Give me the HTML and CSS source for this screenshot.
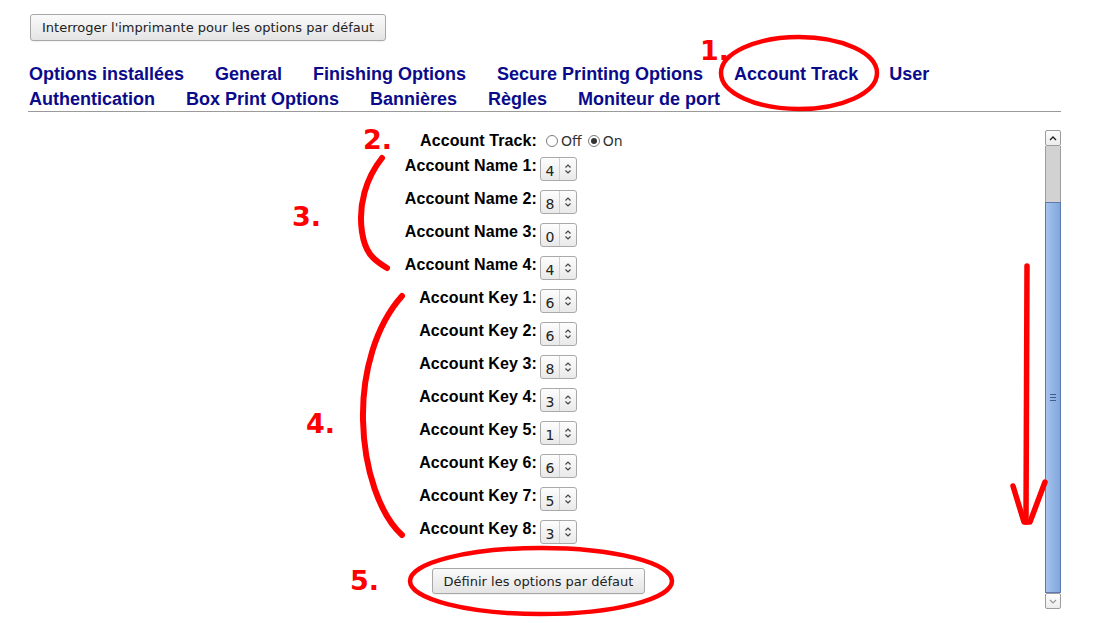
FILE: index.html
```html
<!DOCTYPE html>
<html lang="fr">
<head>
<meta charset="utf-8">
<title>Options par défaut</title>
<link rel="stylesheet" href="styles.css">
</head>
<body>
<div class="page">
  <div class="top">
    <button class="btn">Interroger l'imprimante pour les options par défaut</button>
  </div>
  <nav class="tabs">
    <a>Options installées</a>
    <a>General</a>
    <a>Finishing Options</a>
    <a>Secure Printing Options</a>
    <a>Account Track</a>
    <a>User</a>
    <a>Authentication</a>
    <a>Box Print Options</a>
    <a>Bannières</a>
    <a>Règles</a>
    <a>Moniteur de port</a>
  </nav>
  <div class="content">
    <div class="main">
      <div class="form">
        <div class="lbl first">Account Track:</div>
        <div class="ctl first radios">
          <span class="radio"></span><span class="rtext">Off</span>
          <span class="radio on"></span><span class="rtext">On</span>
        </div>

        <div class="lbl">Account Name 1:</div>
        <div class="ctl"><span class="sel"><span class="num">4</span><span class="sep"></span><svg class="chev" viewBox="0 0 8 12" width="8" height="12"><path d="M1.5 4.5 L4 2 L6.5 4.5 M1.5 7.5 L4 10 L6.5 7.5" fill="none" stroke="#444" stroke-width="1.2"/></svg></span></div>
        <div class="lbl">Account Name 2:</div>
        <div class="ctl"><span class="sel"><span class="num">8</span><span class="sep"></span><svg class="chev" viewBox="0 0 8 12" width="8" height="12"><path d="M1.5 4.5 L4 2 L6.5 4.5 M1.5 7.5 L4 10 L6.5 7.5" fill="none" stroke="#444" stroke-width="1.2"/></svg></span></div>
        <div class="lbl">Account Name 3:</div>
        <div class="ctl"><span class="sel"><span class="num">0</span><span class="sep"></span><svg class="chev" viewBox="0 0 8 12" width="8" height="12"><path d="M1.5 4.5 L4 2 L6.5 4.5 M1.5 7.5 L4 10 L6.5 7.5" fill="none" stroke="#444" stroke-width="1.2"/></svg></span></div>
        <div class="lbl">Account Name 4:</div>
        <div class="ctl"><span class="sel"><span class="num">4</span><span class="sep"></span><svg class="chev" viewBox="0 0 8 12" width="8" height="12"><path d="M1.5 4.5 L4 2 L6.5 4.5 M1.5 7.5 L4 10 L6.5 7.5" fill="none" stroke="#444" stroke-width="1.2"/></svg></span></div>

        <div class="lbl">Account Key 1:</div>
        <div class="ctl"><span class="sel"><span class="num">6</span><span class="sep"></span><svg class="chev" viewBox="0 0 8 12" width="8" height="12"><path d="M1.5 4.5 L4 2 L6.5 4.5 M1.5 7.5 L4 10 L6.5 7.5" fill="none" stroke="#444" stroke-width="1.2"/></svg></span></div>
        <div class="lbl">Account Key 2:</div>
        <div class="ctl"><span class="sel"><span class="num">6</span><span class="sep"></span><svg class="chev" viewBox="0 0 8 12" width="8" height="12"><path d="M1.5 4.5 L4 2 L6.5 4.5 M1.5 7.5 L4 10 L6.5 7.5" fill="none" stroke="#444" stroke-width="1.2"/></svg></span></div>
        <div class="lbl">Account Key 3:</div>
        <div class="ctl"><span class="sel"><span class="num">8</span><span class="sep"></span><svg class="chev" viewBox="0 0 8 12" width="8" height="12"><path d="M1.5 4.5 L4 2 L6.5 4.5 M1.5 7.5 L4 10 L6.5 7.5" fill="none" stroke="#444" stroke-width="1.2"/></svg></span></div>
        <div class="lbl">Account Key 4:</div>
        <div class="ctl"><span class="sel"><span class="num">3</span><span class="sep"></span><svg class="chev" viewBox="0 0 8 12" width="8" height="12"><path d="M1.5 4.5 L4 2 L6.5 4.5 M1.5 7.5 L4 10 L6.5 7.5" fill="none" stroke="#444" stroke-width="1.2"/></svg></span></div>
        <div class="lbl">Account Key 5:</div>
        <div class="ctl"><span class="sel"><span class="num">1</span><span class="sep"></span><svg class="chev" viewBox="0 0 8 12" width="8" height="12"><path d="M1.5 4.5 L4 2 L6.5 4.5 M1.5 7.5 L4 10 L6.5 7.5" fill="none" stroke="#444" stroke-width="1.2"/></svg></span></div>
        <div class="lbl">Account Key 6:</div>
        <div class="ctl"><span class="sel"><span class="num">6</span><span class="sep"></span><svg class="chev" viewBox="0 0 8 12" width="8" height="12"><path d="M1.5 4.5 L4 2 L6.5 4.5 M1.5 7.5 L4 10 L6.5 7.5" fill="none" stroke="#444" stroke-width="1.2"/></svg></span></div>
        <div class="lbl">Account Key 7:</div>
        <div class="ctl"><span class="sel"><span class="num">5</span><span class="sep"></span><svg class="chev" viewBox="0 0 8 12" width="8" height="12"><path d="M1.5 4.5 L4 2 L6.5 4.5 M1.5 7.5 L4 10 L6.5 7.5" fill="none" stroke="#444" stroke-width="1.2"/></svg></span></div>
        <div class="lbl">Account Key 8:</div>
        <div class="ctl"><span class="sel"><span class="num">3</span><span class="sep"></span><svg class="chev" viewBox="0 0 8 12" width="8" height="12"><path d="M1.5 4.5 L4 2 L6.5 4.5 M1.5 7.5 L4 10 L6.5 7.5" fill="none" stroke="#444" stroke-width="1.2"/></svg></span></div>

        <div class="submit"><button class="btn">Définir les options par défaut</button></div>
      </div>
    </div>
    <div class="scrollbar">
      <div class="sb-btn"><svg viewBox="0 0 14 13" width="14" height="13"><path d="M4 8 L7 5 L10 8" fill="none" stroke="#222" stroke-width="1.4"/></svg></div>
      <div class="sb-track"></div>
      <div class="sb-thumb"><span class="grip"></span><span class="grip"></span><span class="grip"></span></div>
      <div class="sb-btn"><svg viewBox="0 0 14 13" width="14" height="13"><path d="M4 5 L7 8 L10 5" fill="none" stroke="#999" stroke-width="1.2"/></svg></div>
    </div>
  </div>
</div>

<svg class="annot" width="1100" height="623" viewBox="0 0 1100 623">
  <g fill="none" stroke="#ff0000" stroke-width="4.5" stroke-linecap="round" stroke-linejoin="round">
    <ellipse cx="799" cy="73" rx="78" ry="36"/>
    <ellipse cx="541" cy="581" rx="131" ry="33"/>
    <path d="M382 158 C 366 178, 358 205, 362 232 C 365 252, 372 259, 387 268" stroke-width="6"/>
    <path d="M402 296 C 376 325, 362 372, 363 420 C 364 470, 380 515, 402 535" stroke-width="6"/>
    <path d="M1027 266 L1026 522" stroke-width="5.5"/>
    <path d="M1013 486 L1024 522 L1030 522 L1045 482" stroke-width="5.5"/>
  </g>
  <g fill="#ff0000" font-family="'DejaVu Sans', sans-serif" font-weight="bold" font-size="27">
    <text x="700" y="60">1.</text>
    <text x="363" y="149">2.</text>
    <text x="292" y="226">3.</text>
    <text x="306" y="433">4.</text>
    <text x="350" y="590">5.</text>
  </g>
</svg>
</body>
</html>
```

FILE: styles.css
```css
html, body {
  margin: 0;
  padding: 0;
  background: #ffffff;
}

body {
  font-family: "Liberation Sans", Arial, sans-serif;
  width: 1100px;
  height: 623px;
  overflow: hidden;
  position: relative;
}

.page {
  display: flex;
  flex-direction: column;
}

.top {
  padding: 14px 0 0 30px;
  height: 27px;
}

.btn {
  font-family: "DejaVu Sans", sans-serif;
  font-size: 13px;
  color: #222;
  height: 27px;
  padding: 0 11px;
  border: 1px solid #a8a8a8;
  border-radius: 3px;
  background: linear-gradient(#fafafa, #e4e4e4);
  box-shadow: 0 1px 0 rgba(0,0,0,0.05);
  margin: 0;
}

.tabs {
  margin: 21px 0 0 28px;
  width: 1033px;
  display: flex;
  flex-wrap: wrap;
  column-gap: 30px;
  border-bottom: 1px solid #9a9a9a;
  box-sizing: border-box;
  height: 50px;
}

.tabs a {
  font-size: 18px;
  font-weight: bold;
  line-height: 25px;
  color: #0a0a8a;
  padding-left: 1px;
}

.content {
  display: flex;
  margin-left: 28px;
  width: 1033px;
}

.main {
  flex: 1;
  padding-left: 4px;
  padding-top: 19px;
}

.form {
  display: grid;
  grid-template-columns: 1fr 1fr;
  column-gap: 3px;
  row-gap: 9px;
}

.lbl {
  font-size: 16px;
  font-weight: bold;
  color: #000;
  text-align: right;
  height: 24px;
  line-height: 18px;
  letter-spacing: 0.1px;
}

.lbl.first {
  height: 20px;
  padding-top: 1px;
  box-sizing: border-box;
  margin-bottom: -3px;
}

.ctl {
  height: 24px;
  display: flex;
  align-items: center;
}

.ctl.first {
  height: 20px;
  margin-bottom: -3px;
}

.radios {
  font-family: "DejaVu Sans", sans-serif;
  font-size: 14px;
  color: #333;
  padding-left: 6px;
}

.radio {
  width: 10px;
  height: 10px;
  border: 1px solid #7a7a7a;
  border-radius: 50%;
  background: #fff;
  margin-right: 3px;
  position: relative;
  box-sizing: content-box;
}

.radio.on::after {
  content: "";
  position: absolute;
  left: 2px;
  top: 2px;
  width: 6px;
  height: 6px;
  border-radius: 50%;
  background: #333;
}

.rtext {
  margin-right: 6px;
}

.sel {
  display: inline-flex;
  align-items: center;
  width: 37px;
  height: 24px;
  box-sizing: border-box;
  border: 1px solid #a9a9a9;
  border-radius: 3px;
  background: linear-gradient(#fdfdfd, #e9e9e9);
  font-family: "DejaVu Sans", sans-serif;
  font-size: 14px;
  color: #222;
}

.num {
  width: 18px;
  text-align: center;
  padding-top: 3px;
}

.sep {
  width: 1px;
  height: 22px;
  background: #d0d0d0;
}

.chev {
  margin-left: 4px;
}

.submit {
  grid-column: 1 / -1;
  display: flex;
  justify-content: center;
  margin-top: 15px;
}

.submit .btn {
  height: 26px;
  padding: 0 11px;
}

.scrollbar {
  width: 16px;
  margin-top: 18px;
  height: 479px;
  display: flex;
  flex-direction: column;
}

.sb-btn {
  height: 14px;
  border: 1px solid #9c9c9c;
  border-radius: 2px;
  background: linear-gradient(#fdfdfd, #ececec);
  display: flex;
  align-items: center;
  justify-content: center;
  box-sizing: content-box;
  width: 14px;
}

.sb-track {
  height: 56px;
  background: #d2d2d2;
  border-left: 1px solid #9e9e9e;
  border-right: 1px solid #9e9e9e;
}

.sb-thumb {
  flex: 1;
  background: linear-gradient(90deg, #a6c4ec, #93b5e6 50%, #82a7dc);
  border: 1px solid #5b7bb0;
  display: flex;
  flex-direction: column;
  align-items: center;
  justify-content: center;
  gap: 2px;
}

.grip {
  width: 6px;
  height: 1px;
  background: #3f5c8c;
}

.annot {
  position: absolute;
  left: 0;
  top: 0;
  pointer-events: none;
}
```
